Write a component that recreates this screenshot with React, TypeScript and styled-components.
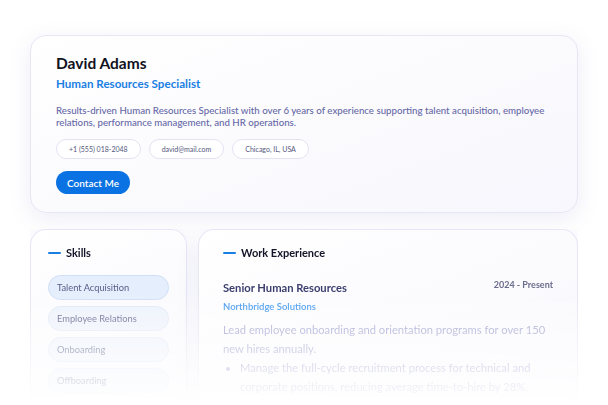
import styled, { createGlobalStyle } from "styled-components";

const GlobalStyle = createGlobalStyle`
  html, body {
    margin: 0;
    padding: 0;
    background: #ffffff;
    font-family: "Lato", "Noto Sans", sans-serif;
    -webkit-font-smoothing: antialiased;
  }
  * { box-sizing: border-box; }
`;

const Page = styled.div`
  width: 608px;
  height: 405px;
  overflow: hidden;
  padding: 35px 30px 0;
  display: flex;
  flex-direction: column;
  gap: 16px;
`;

const Card = styled.section`
  background: linear-gradient(160deg, #ffffff 0%, #f7f7fd 100%);
  border: 1.5px solid #e6e6f6;
  border-radius: 16px;
  box-shadow: 0 6px 22px rgba(110, 110, 190, 0.12);
`;

const ProfileCard = styled(Card)`
  padding: 15px 25px 18px;
  height: 178px;
  flex: none;
`;

const Name = styled.h1`
  margin: 0;
  font-size: 15.5px;
  font-weight: 700;
  color: #111122;
  line-height: 24px;
`;

const Role = styled.h2`
  margin: 1px 0 0;
  font-size: 11.6px;
  font-weight: 700;
  color: #1a7fe3;
  line-height: 16px;
`;

const Summary = styled.p`
  margin: 12px 0 0;
  font-size: 9.7px;
  line-height: 12px;
  color: #6668a6;
  font-weight: 500;
  white-space: nowrap;
`;

const Chips = styled.div`
  display: flex;
  gap: 8px;
  margin-top: 11px;
`;

const Chip = styled.span`
  height: 20px;
  padding: 0 12px;
  display: inline-flex;
  align-items: center;
  border: 1px solid #e3e3f3;
  border-radius: 999px;
  background: #ffffff;
  font-size: 7px;
  color: #55577e;
`;

const ContactButton = styled.button`
  margin-top: 12px;
  height: 23px;
  padding: 0 11px;
  border: none;
  border-radius: 999px;
  background: #0a72e2;
  color: #ffffff;
  font-family: inherit;
  font-size: 10px;
  font-weight: 600;
`;

/* lower half of the page melts into the background */
const Row = styled.div`
  display: grid;
  grid-template-columns: 157px 1fr;
  gap: 11px;
  flex: 1;
  -webkit-mask-image: linear-gradient(to bottom, #000 0%, #000 36%, rgba(0,0,0,0.6) 58%, rgba(0,0,0,0.32) 78%, rgba(0,0,0,0.1) 94%, transparent 100%);
  mask-image: linear-gradient(to bottom, #000 0%, #000 36%, rgba(0,0,0,0.6) 58%, rgba(0,0,0,0.32) 78%, rgba(0,0,0,0.1) 94%, transparent 100%);
`;

const Panel = styled(Card)<{ $pad: number }>`
  padding: 15px ${(p) => p.$pad}px 0;
  border-bottom: none;
  border-bottom-left-radius: 0;
  border-bottom-right-radius: 0;
`;

const SectionTitle = styled.h3`
  margin: 0;
  display: flex;
  align-items: center;
  gap: 5px;
  font-size: 11px;
  font-weight: 700;
  color: #15152a;
  line-height: 16px;

  &::before {
    content: "";
    width: 13px;
    height: 2px;
    border-radius: 1px;
    background: #1a7fe3;
  }
`;

const SkillList = styled.ul`
  list-style: none;
  margin: 14px 0 0;
  padding: 0;
  display: flex;
  flex-direction: column;
  gap: 6px;
`;

const Skill = styled.li<{ $active?: boolean }>`
  height: 25px;
  border-radius: 999px;
  display: flex;
  align-items: center;
  padding: 0 8px;
  font-size: 9.3px;
  color: #5a5c88;
  background: ${(p) => (p.$active ? "#e5eefc" : "#edf2fb")};
  border: 1px solid ${(p) => (p.$active ? "#cfdff7" : "#dfe8f7")};
`;

const JobHead = styled.div`
  display: flex;
  justify-content: space-between;
  align-items: flex-start;
  margin-top: 19px;
`;

const JobTitle = styled.div`
  font-size: 11.2px;
  font-weight: 700;
  color: #3b3f6e;
  line-height: 16px;
`;

const JobDates = styled.div`
  font-size: 9px;
  font-weight: 700;
  color: #6a6c8c;
  line-height: 10px;
`;

const Company = styled.div`
  margin-top: 5px;
  font-size: 9.5px;
  font-weight: 600;
  color: #3d95ee;
`;

const JobText = styled.p`
  margin: 8px 0 0;
  font-size: 11.2px;
  line-height: 19px;
  color: #9a9dcc;
`;

const Bullets = styled.ul`
  margin: 0;
  padding-left: 17px;
  font-size: 11.2px;
  line-height: 19px;
  color: #9a9dcc;
`;

const skills = ["Talent Acquisition", "Employee Relations", "Onboarding", "Offboarding"];

export default function App() {
  return (
    <>
      <GlobalStyle />
      <Page>
        <ProfileCard>
          <Name>David Adams</Name>
          <Role>Human Resources Specialist</Role>
          <Summary>
            Results-driven Human Resources Specialist with over 6 years of experience supporting talent acquisition, employee
            <br />
            relations, performance management, and HR operations.
          </Summary>
          <Chips>
            <Chip>+1 (555) 018-2048</Chip>
            <Chip>david@mail.com</Chip>
            <Chip>Chicago, IL, USA</Chip>
          </Chips>
          <ContactButton>Contact Me</ContactButton>
        </ProfileCard>

        <Row>
          <Panel $pad={17}>
            <SectionTitle>Skills</SectionTitle>
            <SkillList>
              {skills.map((s, i) => (
                <Skill key={s} $active={i === 0}>{s}</Skill>
              ))}
            </SkillList>
          </Panel>
          <Panel $pad={24}>
            <SectionTitle>Work Experience</SectionTitle>
            <JobHead>
              <JobTitle>Senior Human Resources</JobTitle>
              <JobDates>2024 - Present</JobDates>
            </JobHead>
            <Company>Northbridge Solutions</Company>
            <JobText>
              Lead employee onboarding and orientation programs for over 150
              new hires annually.
            </JobText>
            <Bullets>
              <li>
                Manage the full-cycle recruitment process for technical and
                corporate positions, reducing average time-to-hire by 28%.
              </li>
            </Bullets>
          </Panel>
        </Row>
      </Page>
    </>
  );
}
